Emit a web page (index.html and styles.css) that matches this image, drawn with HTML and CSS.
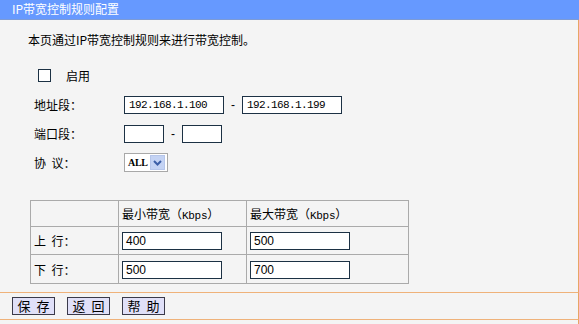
FILE: index.html
```html
<!DOCTYPE html>
<html>
<head>
<meta charset="utf-8">
<link rel="stylesheet" href="styles.css">
</head>
<body>
<div class="page">
  <div class="title">IP带宽控制规则配置</div>
  <div class="main">
    <div class="intro">本页通过IP带宽控制规则来进行带宽控制。</div>
    <div class="form">
      <div class="row check-row"><span class="checkbox"></span><span class="check-label">启用</span></div>
      <div class="row"><span class="label">地址段：</span><span class="input ip">192.168.1.100</span><span class="dash">-</span><span class="input ip">192.168.1.199</span></div>
      <div class="row"><span class="label">端口段：</span><span class="input port"></span><span class="dash">-</span><span class="input port"></span></div>
      <div class="row"><span class="label">协&nbsp;&nbsp;议：</span><span class="select"><span class="sel-text">ALL</span><span class="sel-btn"><svg width="9" height="6" viewBox="0 0 9 6"><path d="M1 1 L4.5 4.5 L8 1" fill="none" stroke="#3c5fa8" stroke-width="2"/></svg></span></span></div>
    </div>
    <table class="bw">
      <tr class="head"><td class="c1"></td><td class="c2">最小带宽（<span class="lat">Kbps</span>）</td><td class="c3">最大带宽（<span class="lat">Kbps</span>）</td></tr>
      <tr class="r1"><td>上&nbsp;&nbsp;行：</td><td><span class="input tin">400</span></td><td><span class="input tin">500</span></td></tr>
      <tr class="r2"><td>下&nbsp;&nbsp;行：</td><td><span class="input tin">500</span></td><td><span class="input tin">700</span></td></tr>
    </table>
  </div>
  <div class="footer">
    <span class="btn">保&nbsp;&nbsp;存</span><span class="btn">返&nbsp;&nbsp;回</span><span class="btn">帮&nbsp;&nbsp;助</span>
  </div>
  <div class="tail"></div>
</div>
</body>
</html>
```
FILE: styles.css
```css
* { box-sizing: border-box; }
html, body { margin: 0; padding: 0; }
body {
  width: 579px;
  height: 324px;
  overflow: hidden;
  background: #f4f4f4;
  font-family: "Noto Sans CJK SC", "Noto Sans", sans-serif;
  font-size: 12px;
  color: #000;
}
.page {
  width: 579px;
  height: 324px;
  display: flex;
  flex-direction: column;
}
.title {
  height: 20px;
  line-height: 18px;
  background: #6699ff;
  border-bottom: 1px solid #7d9bd6;
  color: #fff;
  padding-left: 12px;
  font-size: 12px;
}
.main {
  height: 272px;
  border-right: 1px solid #e7a565;
  padding-top: 12px;
}
.intro {
  padding-left: 28px;
  line-height: 16px;
}
.form {
  margin-top: 13px;
  padding-left: 34px;
}
.row {
  height: 29px;
  display: flex;
  align-items: center;
}
.check-row { padding-left: 4px; }
.checkbox {
  width: 13px;
  height: 13px;
  background: #fff;
  border: 1px solid #1c3144;
}
.check-label { margin-left: 15px; }
.label { width: 90px; }
.input {
  display: inline-block;
  background: #fff;
  border: 1px solid #1c3144;
  height: 18px;
  line-height: 16px;
  padding-left: 4px;
  font-family: "Liberation Mono", monospace;
  font-size: 11px;
  letter-spacing: -0.6px;
  color: #000;
}
.ip { width: 100px; }
.port { width: 40px; }
.dash {
  width: 18px;
  text-align: center;
  font-family: "Liberation Sans", sans-serif;
}
.select {
  display: flex;
  align-items: center;
  width: 44px;
  height: 19px;
  background: #fff;
  border: 1px solid #a8a8a8;
  padding: 1px;
}
.sel-text {
  font-family: "Liberation Serif", serif;
  font-size: 10px;
  font-weight: bold;
  letter-spacing: -0.3px;
  padding-left: 2px;
  width: 24px;
  flex: none;
}
.sel-btn {
  width: 15px;
  height: 15px;
  flex: none;
  background: #c4d3f4;
  border: 1px solid #b6c6ea;
  display: flex;
  align-items: center;
  justify-content: center;
}
.bw {
  margin-top: 23px;
  margin-left: 30px;
  width: 379px;
  border-collapse: collapse;
}
.bw td {
  border: 1px solid #aaa;
  padding: 0 0 0 3px;
  vertical-align: middle;
}
.bw .c1 { width: 88px; }
.bw .c2 { width: 128px; }
.head td { height: 26px; }
.r1 td { height: 28px; }
.r2 td { height: 29px; }
.lat {
  font-family: "Liberation Mono", monospace;
  font-size: 11px;
  letter-spacing: -0.3px;
}
.tin {
  width: 100px;
  font-family: "Liberation Sans", sans-serif;
  font-size: 12px;
  letter-spacing: 0;
  padding-left: 3px;
}
.footer {
  height: 28px;
  border-top: 1px solid #efb27a;
  border-bottom: 1px solid #efb27a;
  border-right: 1px solid #e7a565;
  display: flex;
  align-items: center;
  gap: 12px;
  padding-left: 12px;
}
.btn {
  width: 43px;
  height: 18px;
  background: #e0e0f8;
  border: 1px solid #3a3a4a;
  text-align: center;
  line-height: 16px;
  font-size: 13px;
}
.tail {
  flex: 1;
  border-right: 1px solid #e7a565;
}
```
